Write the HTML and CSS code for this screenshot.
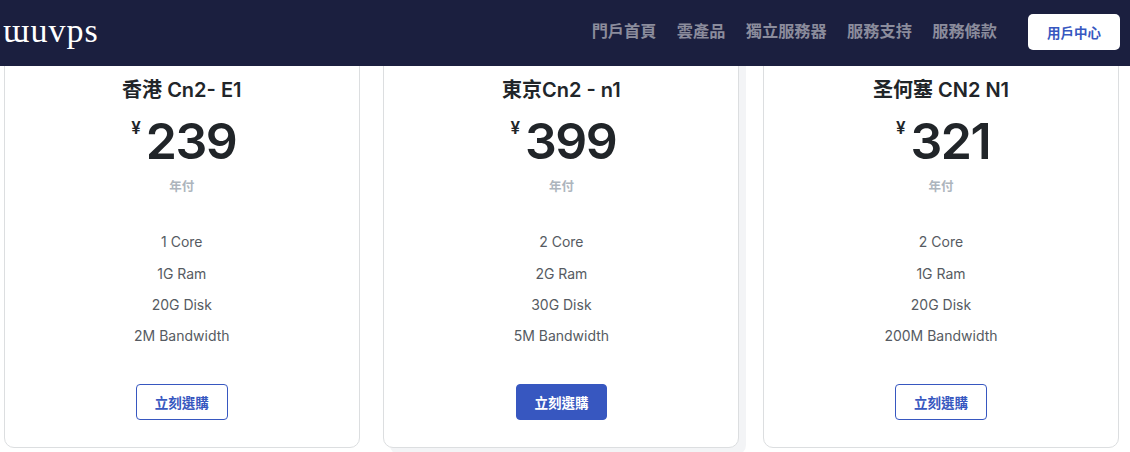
FILE: index.html
```html
<!DOCTYPE html>
<html lang="zh-Hant">

<head>
    <meta charset="UTF-8">
    <meta name="viewport" content="width=device-width, initial-scale=1.0">
    <title>wuvps</title>
    <link rel="stylesheet" href="styles.css">
</head>

<body>
    <header class="top-bar">
        <a class="logo" href="#">ɯuvps</a>
        <nav class="nav-links">
            <a href="#">門戶首頁</a>
            <a href="#">雲產品</a>
            <a href="#">獨立服務器</a>
            <a href="#">服務支持</a>
            <a href="#">服務條款</a>
        </nav>
        <a class="user-btn" href="#">用戶中心</a>
    </header>

    <main class="price-row">
        <section class="price-card">
            <h3 class="plan-name">香港 Cn2- E1</h3>
            <div class="price"><span class="currency">¥</span>239</div>
            <div class="period">年付</div>
            <ul class="specs">
                <li>1 Core</li>
                <li>1G Ram</li>
                <li>20G Disk</li>
                <li>2M Bandwidth</li>
            </ul>
            <a class="buy-btn" href="#">立刻選購</a>
        </section>

        <section class="price-card featured">
            <h3 class="plan-name">東京Cn2 - n1</h3>
            <div class="price"><span class="currency">¥</span>399</div>
            <div class="period">年付</div>
            <ul class="specs">
                <li>2 Core</li>
                <li>2G Ram</li>
                <li>30G Disk</li>
                <li>5M Bandwidth</li>
            </ul>
            <a class="buy-btn" href="#">立刻選購</a>
        </section>

        <section class="price-card">
            <h3 class="plan-name">圣何塞 CN2 N1</h3>
            <div class="price"><span class="currency">¥</span>321</div>
            <div class="period">年付</div>
            <ul class="specs">
                <li>2 Core</li>
                <li>1G Ram</li>
                <li>20G Disk</li>
                <li>200M Bandwidth</li>
            </ul>
            <a class="buy-btn" href="#">立刻選購</a>
        </section>
    </main>
</body>

</html>
```

FILE: styles.css
```css
* {
    box-sizing: border-box;
}

body {
    margin: 0;
    height: 452px;
    overflow: hidden;
    background-color: #fff;
    color: #212529;
    font-family: Inter, "Noto Sans CJK TC", sans-serif;
}

a {
    text-decoration: none;
}

.top-bar {
    position: relative;
    z-index: 2;
    height: 66px;
    padding: 0 10px 0 3px;
    display: flex;
    align-items: center;
    background-color: #1b1f3f;
}

.logo {
    margin-bottom: 5px;
    color: #fff;
    font-family: "Liberation Serif", serif;
    font-size: 34px;
    letter-spacing: 1px;
    line-height: 1;
}

.nav-links {
    margin-left: auto;
    margin-right: 31px;
    margin-bottom: 6px;
    display: flex;
    gap: 20.4px;
}

.nav-links a {
    color: #8b8c9c;
    font-size: 16.2px;
    font-weight: 700;
}

.user-btn {
    width: 92px;
    height: 36px;
    margin-bottom: 2px;
    display: flex;
    align-items: center;
    justify-content: center;
    border-radius: 5px;
    background-color: #fff;
    color: #3757c0;
    font-size: 13.5px;
    font-weight: 600;
}

.price-row {
    margin-top: -30px;
    padding-left: 3.8px;
    display: flex;
    gap: 23.6px;
}

.price-card {
    width: 356px;
    height: 412px;
    padding-top: 38px;
    display: flex;
    flex-direction: column;
    align-items: center;
    background-color: #fff;
    border: 1px solid #dcdee0;
    border-radius: 10px;
    text-align: center;
}

.featured {
    box-shadow: 7px 7px 0 #f3f4f6;
}

.plan-name {
    margin: 0;
    font-size: 20px;
    font-weight: 600;
    line-height: 30px;
}

.price {
    margin-top: 6px;
    padding-left: 4px;
    display: flex;
    font-size: 50px;
    font-weight: 600;
    letter-spacing: -1.5px;
    line-height: 60px;
}

.currency {
    margin-right: 5px;
    font-size: 17px;
    font-weight: 600;
    letter-spacing: 0;
    line-height: 34px;
}

.period {
    margin-top: 7px;
    color: #adb5bd;
    font-size: 12.5px;
    font-weight: 700;
    line-height: 18px;
}

.specs {
    margin: 30.2px 0 0;
    padding: 0;
    list-style: none;
    color: #565b62;
    font-size: 14px;
    line-height: 31.4px;
}

.buy-btn {
    width: 91.6px;
    height: 36px;
    margin-top: 32.2px;
    display: flex;
    align-items: center;
    justify-content: center;
    border: 1px solid #3757c0;
    border-radius: 4px;
    color: #3757c0;
    font-size: 13.5px;
    font-weight: 700;
}

.featured .buy-btn {
    background-color: #3757c0;
    color: #fff;
}
```
